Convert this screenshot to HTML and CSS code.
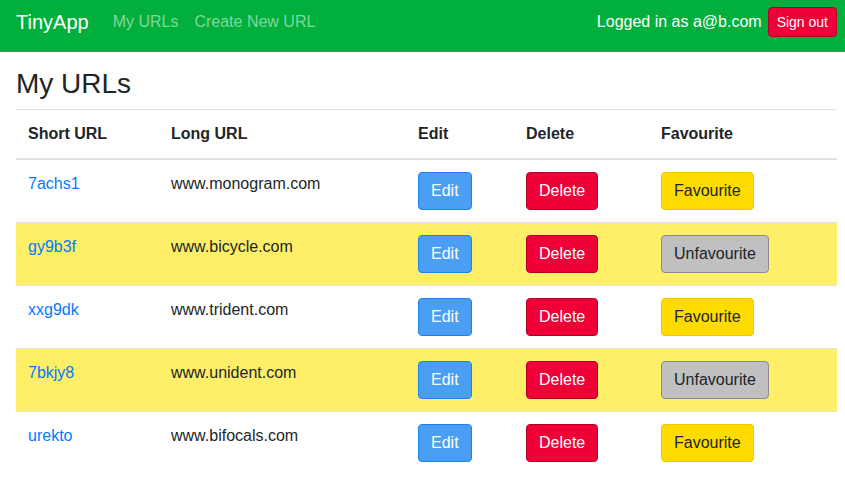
FILE: index.html
```html
<!DOCTYPE html>
<html>
<head>
<meta charset="utf-8">
<link rel="stylesheet" href="styles.css">
</head>
<body>
<nav class="navbar">
  <a class="brand" href="#">TinyApp</a>
  <a class="nav-link" href="#">My URLs</a>
  <a class="nav-link" href="#">Create New URL</a>
  <div class="nav-right">
    <span class="user">Logged in as a@b.com</span>
    <button class="btn btn-sm btn-danger">Sign out</button>
  </div>
</nav>
<main class="content">
  <h3 class="title">My URLs</h3>
  <table class="table">
    <colgroup>
      <col class="c1"><col class="c2"><col class="c3"><col class="c4"><col class="c5">
    </colgroup>
    <thead>
      <tr><th>Short URL</th><th>Long URL</th><th>Edit</th><th>Delete</th><th>Favourite</th></tr>
    </thead>
    <tbody>
      <tr>
        <td><a href="#">7achs1</a></td><td>www.monogram.com</td>
        <td><button class="btn btn-edit">Edit</button></td>
        <td><button class="btn btn-danger">Delete</button></td>
        <td><button class="btn btn-fav">Favourite</button></td>
      </tr>
      <tr class="faved">
        <td><a href="#">gy9b3f</a></td><td>www.bicycle.com</td>
        <td><button class="btn btn-edit">Edit</button></td>
        <td><button class="btn btn-danger">Delete</button></td>
        <td><button class="btn btn-unfav">Unfavourite</button></td>
      </tr>
      <tr>
        <td><a href="#">xxg9dk</a></td><td>www.trident.com</td>
        <td><button class="btn btn-edit">Edit</button></td>
        <td><button class="btn btn-danger">Delete</button></td>
        <td><button class="btn btn-fav">Favourite</button></td>
      </tr>
      <tr class="faved">
        <td><a href="#">7bkjy8</a></td><td>www.unident.com</td>
        <td><button class="btn btn-edit">Edit</button></td>
        <td><button class="btn btn-danger">Delete</button></td>
        <td><button class="btn btn-unfav">Unfavourite</button></td>
      </tr>
      <tr>
        <td><a href="#">urekto</a></td><td>www.bifocals.com</td>
        <td><button class="btn btn-edit">Edit</button></td>
        <td><button class="btn btn-danger">Delete</button></td>
        <td><button class="btn btn-fav">Favourite</button></td>
      </tr>
    </tbody>
  </table>
</main>
</body>
</html>
```

FILE: styles.css
```css
* { box-sizing: border-box; }
html, body {
  margin: 0;
  padding: 0;
  font-family: "Liberation Sans", Arial, sans-serif;
  font-size: 16px;
  line-height: 1.5;
  color: #212529;
  background: #fff;
}
a { text-decoration: none; }

.navbar {
  height: 52px;
  background: #00af3c;
  padding: 7px 8px 0 16px;
  display: flex;
  align-items: center;
  align-self: flex-start;
}
.navbar { align-items: flex-start; }
.brand {
  color: #fff;
  font-size: 20px;
  line-height: 30px;
  margin-right: 16px;
}
.nav-link {
  color: rgba(255, 255, 255, 0.5);
  line-height: 24px;
  padding: 3px 8px;
}
.nav-right {
  margin-left: auto;
  display: flex;
  align-items: center;
  height: 30px;
}
.user {
  color: #fff;
  line-height: 24px;
  margin-right: 6px;
}

.btn {
  font-family: inherit;
  font-size: 16px;
  line-height: 24px;
  padding: 6px 12px;
  border: 1px solid transparent;
  border-radius: 4px;
  cursor: pointer;
  display: inline-block;
}
.btn-sm {
  font-size: 14px;
  line-height: 21px;
  padding: 3px 8px;
  height: 30px;
}
.btn-danger { background: #ef0036; border-color: #b30029; color: #fff; }
.btn-edit { background: #4a9ff5; border-color: #1f80f0; color: #fff; }
.btn-fav { background: #ffdb00; border-color: #f2c500; color: #212529; }
.btn-unfav { background: #c0c0c0; border-color: #8c8c8c; color: #212529; }

.content { padding: 0 8px 0 16px; }
.title {
  font-size: 28px;
  font-weight: 500;
  line-height: 1.2;
  margin: 15px 0 8px;
}
.table {
  width: 100%;
  border-collapse: separate;
  border-spacing: 0;
  table-layout: fixed;
}
.c1 { width: 143px; }
.c2 { width: 247px; }
.c3 { width: 108px; }
.c4 { width: 135px; }
.table th, .table td {
  padding: 12px;
  text-align: left;
  vertical-align: top;
}
.table th {
  font-weight: 700;
  border-top: 1px solid #dee2e6;
  border-bottom: 2px solid #dee2e6;
}
.table td { border-top: 1px solid #dee2e6; }
.table tbody tr:first-child td { border-top: 0; }
.table td a { color: #007bff; }
.faved td { background: #ffef68; }
```
